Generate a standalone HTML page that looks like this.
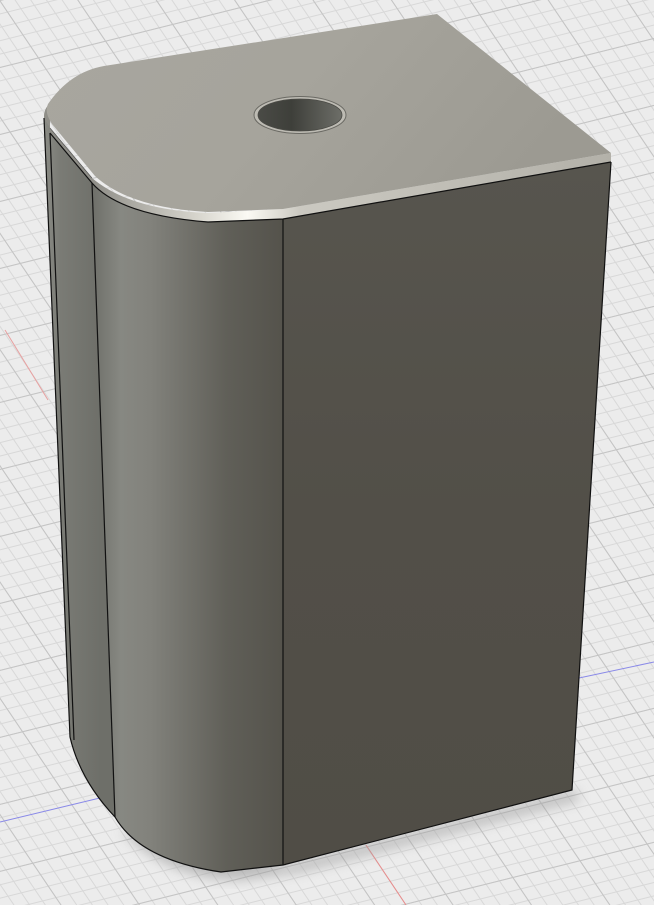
<!DOCTYPE html>
<html><head><meta charset="utf-8"><style>
html,body{margin:0;padding:0;background:#ececec;}
svg{display:block;}
</style></head><body>
<svg width="654" height="905" viewBox="0 0 654 905" xmlns="http://www.w3.org/2000/svg">
<defs>
<pattern id="pa" width="13" height="13" patternUnits="userSpaceOnUse" patternTransform="rotate(-14)">
<rect width="13" height="1" fill="#d8d8d8"/>
</pattern>
<pattern id="pb" width="13" height="13" patternUnits="userSpaceOnUse" patternTransform="rotate(56)">
<rect width="13" height="1" fill="#d8d8d8"/>
</pattern>
<pattern id="pa2" width="65" height="65" patternUnits="userSpaceOnUse" patternTransform="rotate(-14)">
<rect width="65" height="1" fill="#c4c4c4"/>
</pattern>
<pattern id="pb2" width="65" height="65" patternUnits="userSpaceOnUse" patternTransform="rotate(56)">
<rect width="65" height="1" fill="#c4c4c4"/>
</pattern>
<linearGradient id="top" x1="0" y1="0" x2="1" y2="0.3">
<stop offset="0" stop-color="#a8a69f"/>
<stop offset="0.5" stop-color="#a6a49c"/>
<stop offset="1" stop-color="#9c9a92"/>
</linearGradient>
<linearGradient id="front" x1="0" y1="0" x2="0" y2="1">
<stop offset="0" stop-color="#57554e"/>
<stop offset="0.5" stop-color="#524f48"/>
<stop offset="1" stop-color="#504d46"/>
</linearGradient>
<linearGradient id="side" x1="92" y1="0" x2="285" y2="0" gradientUnits="userSpaceOnUse">
<stop offset="0" stop-color="#6e6f69"/>
<stop offset="0.15" stop-color="#878882"/>
<stop offset="0.3" stop-color="#82827c"/>
<stop offset="0.7" stop-color="#605f58"/>
<stop offset="1" stop-color="#54524b"/>
</linearGradient>
<linearGradient id="strip" x1="44" y1="0" x2="100" y2="0" gradientUnits="userSpaceOnUse">
<stop offset="0" stop-color="#8a8b85"/>
<stop offset="0.3" stop-color="#7a7b75"/>
<stop offset="1" stop-color="#6e6f69"/>
</linearGradient>
<linearGradient id="hole" x1="0" y1="0" x2="1" y2="0">
<stop offset="0" stop-color="#4a4b46"/>
<stop offset="0.4" stop-color="#3e3f3a"/>
<stop offset="1" stop-color="#6d6e68"/>
</linearGradient>
<linearGradient id="bev" x1="92" y1="0" x2="611" y2="0" gradientUnits="userSpaceOnUse">
<stop offset="0" stop-color="#8f8e88"/>
<stop offset="0.2" stop-color="#d6d4cc"/>
<stop offset="0.3" stop-color="#fbfaf4"/>
<stop offset="0.4" stop-color="#cbc9c1"/>
<stop offset="1" stop-color="#b3b1a9"/>
</linearGradient>
<filter id="blur"><feGaussianBlur stdDeviation="6"/></filter>
</defs>
<rect width="654" height="905" fill="#ececec"/>
<rect width="654" height="905" fill="url(#pa)"/>
<rect width="654" height="905" fill="url(#pb)"/>
<rect width="654" height="905" fill="url(#pa2)"/>
<rect width="654" height="905" fill="url(#pb2)"/>
<line x1="0" y1="822" x2="104" y2="797" stroke="#8a8ae8" stroke-width="1"/>
<line x1="579" y1="678" x2="654" y2="662" stroke="#8a8ae8" stroke-width="1"/>
<line x1="366" y1="845" x2="406" y2="905" stroke="#e88a8a" stroke-width="1"/>
<line x1="5" y1="330" x2="48" y2="400" stroke="#e8a0a0" stroke-width="1"/>
<path d="M120 830 Q170 880 240 880 L300 872 L580 800 L575 790 L285 865 Z" fill="#9a9a9a" filter="url(#blur)" opacity="0.6"/>
<path d="M44 118 Q44 108 50 104 L50 133 L92 183 L115 817 Q80 780 70 737 Z" fill="url(#strip)"/>
<path d="M92 183 Q120 215 208 222 L283 219 L283 865 L221 872 Q140 860 115 817 Z" fill="url(#side)"/>
<path d="M283 219 L611 162 L572 790 L283 865 Z" fill="url(#front)"/>
<path d="M44 118 Q44 108 50 104 L50 133 L92 183 Q120 215 208 222 L283 219 L611 162 L611 153 L283 209 L208 213 Q130 210 92 178 L50 128 Z" fill="url(#bev)"/>
<path d="M437 14 L611 153 L283 209 L208 212 Q130 208 95 176 L52 124 Q44 112 48 104 Q70 72 104 66 Z" fill="url(#top)"/>
<ellipse cx="300" cy="115" rx="46" ry="18.5" fill="#bdbbb3" stroke="#6a6963" stroke-width="1"/>
<ellipse cx="300" cy="115" rx="42" ry="16" fill="url(#hole)" stroke="#4a4a45" stroke-width="0.8"/>
<g fill="none" stroke="#111" stroke-width="1.2">
<path d="M44 118 L70 737 Q80 780 115 817 Q140 860 221 872 L283 865 L572 790 L611 162"/>
<path d="M50 133 L74 740"/>
<path d="M92 183 L115 817"/>
<path d="M50 133 L92 183 Q120 215 208 222 L283 219 L611 162"/>
<path d="M283 219 L283 865"/>
<path d="M50 128 L92 178" stroke-width="0.6" opacity="0.6"/>
</g>
</svg>
</body></html>
